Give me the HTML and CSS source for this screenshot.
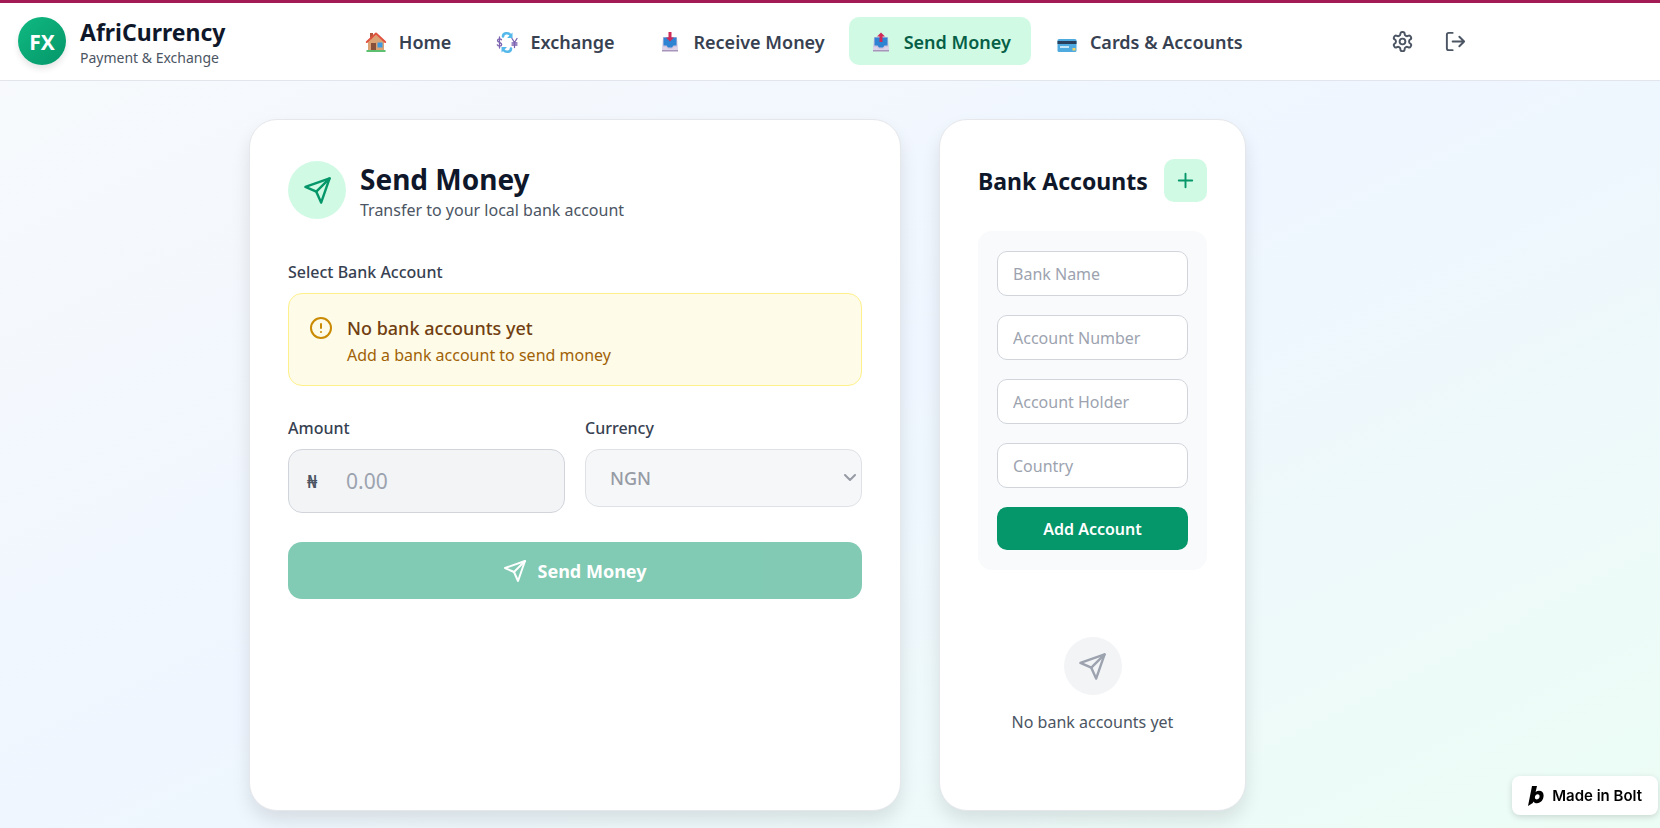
FILE: index.html
```html
<!DOCTYPE html>
<html lang="en">
<head>
  <meta charset="UTF-8">
  <meta name="viewport" content="width=device-width, initial-scale=1.0">
  <title>AfriCurrency - Send Money</title>
  <link rel="stylesheet" href="styles.css">
</head>
<body>
  <svg width="0" height="0" class="sprite" aria-hidden="true">
    <symbol id="icon-send" viewBox="0 0 24 24">
      <path d="m22 2-7 20-4-9-9-4Z"/>
      <path d="M22 2 11 13"/>
    </symbol>
  </svg>

  <header class="header">
    <div class="header-inner">
      <div class="brand">
        <div class="brand-logo">FX</div>
        <div>
          <div class="brand-name">AfriCurrency</div>
          <div class="brand-sub">Payment &amp; Exchange</div>
        </div>
      </div>

      <nav class="nav">
        <a href="#home" class="nav-link">
          <svg class="nav-icon" viewBox="0 0 24 24">
            <rect x="4" y="10" width="16" height="11" fill="#dba274"/>
            <path d="M6 3h3v6H6z" fill="#b5563c"/>
            <path d="M12 4.500 5 11v3h14v-3z" fill="#dba274"/>
            <path d="M2.800 12 12 3.500 21.200 12" fill="none" stroke="#e0533f" stroke-width="2"/>
            <rect x="7" y="13" width="5" height="8" fill="#86503a"/>
            <rect x="13.500" y="12.500" width="5" height="5" fill="#3f9be0"/>
            <rect x="2.500" y="20" width="19" height="2" fill="#5cc070"/>
          </svg>
          Home
        </a>
        <a href="#exchange" class="nav-link">
          <svg class="nav-icon" viewBox="0 0 24 24">
            <path d="M8 6.500C8 3 13 2 15.500 5M16 18.500c0 3.500-5 4.500-7.500 1.500" fill="none" stroke="#55b8ea" stroke-width="2.600"/>
            <path d="m17.500 2.500v5.500h-5.500zM6.500 22.500V17H12z" fill="#55b8ea"/>
            <path d="M6.500 9.800C6 8.500 2.500 8.300 2.500 10.500c0 2.200 4.200 1.500 4.200 3.900 0 2.200-3.700 2.200-4.400.4M4.500 7v11M17 8.500l2.500 4 2.500-4M19.500 12.500v5M17 13h5M17 15h5" fill="none" stroke="#7b62b0" stroke-width="1.300"/>
          </svg>
          Exchange
        </a>
        <a href="#receive" class="nav-link">
          <svg class="nav-icon" viewBox="0 0 24 24">
            <path d="M5 7h14l1 14H4z" fill="#cfc3df"/>
            <path d="M5.500 7.500h13v8h-3l-1.500 2h-4l-1.500-2h-3z" fill="#2f83d3"/>
            <path d="M4 17h4l2 2h4l2-2h4v4H4z" fill="#ddd3e8"/>
            <path d="M4 20h16v1.500H4z" fill="#a894bb"/>
            <path d="M10.500 2h3v5.500H16l-4 4-4-4h2.500z" fill="#d02b58"/>
          </svg>
          Receive Money
        </a>
        <a href="#send" class="nav-link active" aria-current="page">
          <svg class="nav-icon" viewBox="0 0 24 24">
            <path d="M5 7h14l1 14H4z" fill="#cfc3df"/>
            <path d="M5.500 7.500h13v8h-3l-1.500 2h-4l-1.500-2h-3z" fill="#2f83d3"/>
            <path d="M4 17h4l2 2h4l2-2h4v4H4z" fill="#ddd3e8"/>
            <path d="M4 20h16v1.500H4z" fill="#a894bb"/>
            <path d="M10.500 12h3V6.500H16l-4-4-4 4h2.500z" fill="#d02b58"/>
          </svg>
          Send Money
        </a>
        <a href="#cards" class="nav-link">
          <svg class="nav-icon" viewBox="0 0 24 24">
            <rect x="2.500" y="9" width="19" height="13" rx="1.500" fill="#4fabdf"/>
            <rect x="2.500" y="11" width="19" height="3" fill="#28405c"/>
            <rect x="5" y="16" width="9" height="2" fill="#c5e6f7"/>
            <rect x="17.500" y="18" width="3" height="2.500" fill="#f2d264"/>
          </svg>
          Cards &amp; Accounts
        </a>
      </nav>

      <div class="header-actions">
        <button type="button" class="icon-btn" aria-label="Settings">
          <svg viewBox="0 0 24 24">
            <path d="M12.220 2h-.44a2 2 0 0 0-2 2v.18a2 2 0 0 1-1 1.730l-.43.25a2 2 0 0 1-2 0l-.15-.08a2 2 0 0 0-2.730.730l-.22.38a2 2 0 0 0 .73 2.730l.15.1a2 2 0 0 1 1 1.720v.51a2 2 0 0 1-1 1.740l-.15.090a2 2 0 0 0-.73 2.730l.22.38a2 2 0 0 0 2.730.73l.15-.08a2 2 0 0 1 2 0l.43.25a2 2 0 0 1 1 1.730V20a2 2 0 0 0 2 2h.44a2 2 0 0 0 2-2v-.18a2 2 0 0 1 1-1.730l.43-.25a2 2 0 0 1 2 0l.15.080a2 2 0 0 0 2.730-.73l.22-.39a2 2 0 0 0-.73-2.730l-.15-.08a2 2 0 0 1-1-1.740v-.5a2 2 0 0 1 1-1.740l.15-.09a2 2 0 0 0 .73-2.730l-.22-.38a2 2 0 0 0-2.730-.73l-.15.080a2 2 0 0 1-2 0l-.43-.25a2 2 0 0 1-1-1.730V4a2 2 0 0 0-2-2z"/>
            <circle cx="12" cy="12" r="3"/>
          </svg>
        </button>
        <button type="button" class="icon-btn" aria-label="Log out">
          <svg viewBox="0 0 24 24">
            <path d="M9 21H5a2 2 0 0 1-2-2V5a2 2 0 0 1 2-2h4"/>
            <path d="m16 17 5-5-5-5M21 12H9"/>
          </svg>
        </button>
      </div>
    </div>
  </header>

  <main class="main">
    <section class="card">
      <div class="card-title">
        <div class="circle circle-green">
          <svg><use href="#icon-send"/></svg>
        </div>
        <div>
          <h1>Send Money</h1>
          <p>Transfer to your local bank account</p>
        </div>
      </div>

      <form id="sendForm">
        <div class="label">Select Bank Account</div>
        <div class="notice">
          <svg viewBox="0 0 24 24">
            <circle cx="12" cy="12" r="10"/>
            <path d="M12 8v4M12 16h.01"/>
          </svg>
          <div>
            <p class="notice-title">No bank accounts yet</p>
            <p class="notice-text">Add a bank account to send money</p>
          </div>
        </div>

        <div class="form-row">
          <div>
            <label class="label" for="amount">Amount</label>
            <div class="amount-box">
              <span>₦</span>
              <input type="text" id="amount" placeholder="0.00" disabled>
            </div>
          </div>
          <div>
            <label class="label" for="currency">Currency</label>
            <div class="select-box">
              <select id="currency" disabled>
                <option>NGN</option>
              </select>
              <svg viewBox="0 0 12 8"><path d="m1 1 5 5 5-5"/></svg>
            </div>
          </div>
        </div>

        <button type="submit" class="send-btn" disabled>
          <svg><use href="#icon-send"/></svg>
          Send Money
        </button>
      </form>
    </section>

    <section class="card">
      <div class="side-title">
        <h2>Bank Accounts</h2>
        <button type="button" class="plus-btn" aria-label="Add bank account">
          <svg viewBox="0 0 24 24"><path d="M5 12h14M12 5v14"/></svg>
        </button>
      </div>

      <form class="account-form">
        <input type="text" placeholder="Bank Name" aria-label="Bank Name">
        <input type="text" placeholder="Account Number" aria-label="Account Number">
        <input type="text" placeholder="Account Holder" aria-label="Account Holder">
        <input type="text" placeholder="Country" aria-label="Country">
        <button type="submit">Add Account</button>
      </form>

      <div class="empty">
        <div class="circle circle-gray">
          <svg><use href="#icon-send"/></svg>
        </div>
        <p>No bank accounts yet</p>
      </div>
    </section>
  </main>

  <a href="#bolt" class="bolt-badge">
    <svg viewBox="0 0 16 20">
      <path fill-rule="evenodd" d="M4 0h5L7.600 6C8.600 5.200 9.700 4.800 11 4.800c3 0 4.600 2 4.600 4.800 0 4.300-2.800 7.600-6.600 7.600-1.700 0-3-.6-3.700-1.800L4.800 17 0 20zM8.900 13.400c1.600 0 2.700-1.400 2.700-3.100 0-1.200-.7-2-1.900-2-1.600 0-2.800 1.400-2.800 3.100 0 1.200.8 2 2 2z"/>
    </svg>
    Made in Bolt
  </a>
</body>
</html>
```
FILE: styles.css
```css
* {
  box-sizing: border-box;
}

body {
  margin: 0;
  min-height: 100vh;
  font-family: "Noto Sans", "Open Sans", sans-serif;
  font-size: 16px;
  line-height: 27px;
  color: #0f172a;
  background: linear-gradient(to bottom right, #f8fafc, #eff6ff, #ecfdf5);
}

h1,
h2,
p {
  margin: 0;
}

a {
  color: inherit;
  text-decoration: none;
}

button,
input,
select {
  font-family: inherit;
  font-size: 16px;
}

svg {
  flex: none;
  fill: none;
  stroke: currentColor;
  stroke-width: 2;
  stroke-linecap: round;
  stroke-linejoin: round;
}

.sprite {
  position: absolute;
}

/* header */
.header {
  background-color: white;
  border-top: 3px solid #a31b54;
  border-bottom: 1px solid #e2e5ec;
}

.header-inner {
  display: flex;
  justify-content: space-between;
  align-items: center;
  width: 90%;
  height: 77px;
  padding: 0 17px 1px 18px;
}

.brand {
  display: flex;
  align-items: center;
  gap: 14px;
}

.brand-logo {
  width: 48px;
  height: 48px;
  border-radius: 50%;
  background: linear-gradient(to bottom right, #10b981, #059669);
  box-shadow: 0 4px 6px rgba(0, 0, 0, 0.1);
  color: white;
  font-size: 21px;
  font-weight: 700;
  line-height: 50px;
  text-align: center;
}

.brand-name {
  padding-top: 4px;
  font-size: 23px;
  font-weight: 700;
  line-height: 29px;
}

.brand-sub {
  color: #4b5563;
  font-size: 14px;
  line-height: 22px;
}

.nav {
  display: flex;
  gap: 4px;
}

.nav-link {
  display: flex;
  align-items: center;
  gap: 11px;
  height: 48px;
  padding: 2px 20px 0;
  border-radius: 10px;
  color: #374151;
  font-size: 18px;
  font-weight: 600;
}

.nav-link.active {
  background-color: #d1fae5;
  color: #065f46;
}

.nav-icon {
  width: 24px;
  height: 24px;
  stroke: none;
}

.header-actions {
  display: flex;
  gap: 10px;
}

.icon-btn {
  padding: 10px;
  border: none;
  background: none;
  color: #4b5563;
  cursor: pointer;
}

.icon-btn svg {
  display: block;
  width: 23px;
  height: 23px;
}

/* cards */
.main {
  display: grid;
  grid-template-columns: minmax(0, 1fr) 307px;
  gap: 38px;
  width: 90%;
  padding: 38px 248px 18px 249px;
}

.card {
  min-height: 692px;
  padding: 39px 38px;
  border: 1px solid #e5e7eb;
  border-radius: 28px;
  background-color: white;
  box-shadow: 0 10px 18px rgba(0, 0, 0, 0.1);
}

.card-title {
  display: flex;
  align-items: center;
  gap: 14px;
  margin-bottom: 39px;
}

.card-title h1 {
  font-size: 28px;
  line-height: 40px;
}

.card-title p {
  color: #4b5563;
  line-height: 22px;
}

.circle {
  display: flex;
  align-items: center;
  justify-content: center;
  width: 58px;
  height: 58px;
  border-radius: 50%;
}

.circle svg {
  width: 29px;
  height: 29px;
}

.circle-green {
  background-color: #d1fae5;
  color: #059669;
}

.circle-gray {
  background-color: #f3f4f6;
  color: #9ca3af;
}

.label {
  display: block;
  margin-bottom: 9px;
  color: #374151;
  font-weight: 500;
  line-height: 24px;
}

.notice {
  display: flex;
  gap: 14px;
  margin-bottom: 30px;
  padding: 20px 20px 18px;
  border: 1px solid #fef08a;
  border-radius: 14px;
  background-color: #fefce8;
}

.notice svg {
  width: 24px;
  height: 24px;
  margin-top: 2px;
  color: #ca8a04;
}

.notice-title {
  color: #713f12;
  font-size: 18px;
  font-weight: 500;
  line-height: 29px;
}

.notice-text {
  color: #a16207;
  line-height: 24px;
}

.form-row {
  display: grid;
  grid-template-columns: repeat(2, minmax(0, 1fr));
  gap: 20px;
  margin-bottom: 29px;
}

.amount-box {
  display: flex;
  align-items: center;
  height: 64px;
  padding: 0 18px;
  border: 1px solid #d1d5db;
  border-radius: 14px;
  background-color: #f3f4f6;
}

.amount-box span {
  width: 39px;
  color: #4b5563;
  font-size: 18px;
  font-weight: 600;
}

.amount-box input {
  flex: 1;
  min-width: 0;
  padding: 0;
  border: none;
  background: none;
  font-size: 21px;
}

input::placeholder {
  color: #9ca3af;
}

.select-box {
  position: relative;
  opacity: 0.7;
}

.select-box select {
  display: block;
  width: 100%;
  height: 58px;
  padding: 0 24px;
  border: 1px solid #d1d5db;
  border-radius: 14px;
  background-color: #f3f4f6;
  color: #6b7280;
  font-size: 18px;
  font-weight: 500;
  opacity: 1;
  appearance: none;
}

.select-box svg {
  position: absolute;
  top: 25px;
  right: 6px;
  width: 12px;
  height: 8px;
  color: #6b7280;
  pointer-events: none;
}

.send-btn {
  display: flex;
  align-items: center;
  justify-content: center;
  gap: 10px;
  width: 100%;
  height: 57px;
  border: none;
  border-radius: 14px;
  background-color: #059669;
  color: white;
  font-size: 18px;
  font-weight: 700;
  opacity: 0.5;
}

.send-btn svg {
  width: 24px;
  height: 24px;
}

/* bank accounts */
.side-title {
  display: flex;
  align-items: center;
  justify-content: space-between;
  margin-bottom: 29px;
}

.side-title h2 {
  font-size: 23px;
  line-height: 32px;
  white-space: nowrap;
}

.plus-btn {
  padding: 10px;
  border: none;
  border-radius: 10px;
  background-color: #d1fae5;
  color: #059669;
  cursor: pointer;
}

.plus-btn svg {
  display: block;
  width: 23px;
  height: 23px;
}

.account-form {
  display: flex;
  flex-direction: column;
  gap: 19px;
  padding: 20px 19px;
  border-radius: 14px;
  background-color: #f9fafb;
}

.account-form input {
  width: 100%;
  height: 45px;
  padding: 0 15px;
  border: 1px solid #d1d5db;
  border-radius: 10px;
  background-color: white;
}

.account-form button {
  height: 43px;
  border: none;
  border-radius: 10px;
  background-color: #059669;
  color: white;
  font-weight: 600;
  cursor: pointer;
}

.empty {
  display: flex;
  flex-direction: column;
  align-items: center;
  gap: 14px;
  padding-top: 67px;
  color: #4b5563;
}

.bolt-badge {
  position: fixed;
  right: 2px;
  bottom: 13px;
  display: flex;
  align-items: center;
  gap: 8px;
  height: 39px;
  padding: 0 16px;
  border-radius: 8px;
  background-color: white;
  box-shadow: 0 2px 6px rgba(0, 0, 0, 0.15);
  color: black;
  font-family: Inter, sans-serif;
  font-size: 15px;
  font-weight: 600;
}

.bolt-badge svg {
  width: 16px;
  height: 20px;
  fill: black;
  stroke: none;
}
```
